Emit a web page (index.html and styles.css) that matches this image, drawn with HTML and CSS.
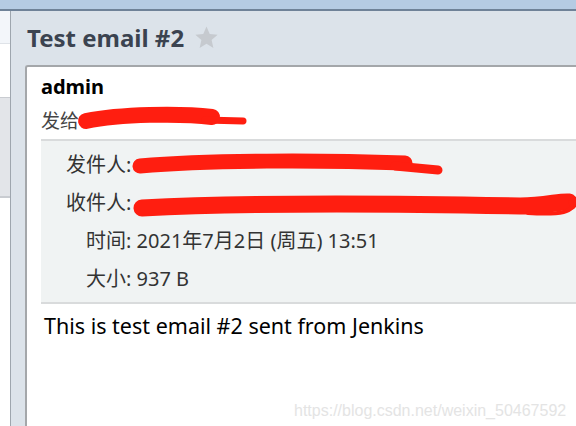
FILE: index.html
```html
<!DOCTYPE html>
<html lang="zh-CN">

<head>
    <meta charset="UTF-8">
    <title>Test email #2</title>
    <link rel="stylesheet" href="styles.css">
</head>

<body>
    <div class="topbar"></div>

    <div class="main">
        <div class="sidebar">
            <div class="side-head"></div>
            <div class="side-gap"></div>
            <div class="side-box"></div>
        </div>

        <div class="content">
            <h1 class="subject">
                Test email #2
                <svg class="star" width="25" height="25" viewBox="0 0 24 24">
                    <path d="M12 1.5l3.1 7.1 7.6.7-5.8 5.1 1.7 7.6L12 18l-6.6 4 1.7-7.6-5.8-5.1 7.6-.7z" fill="#c6cacf"/>
                </svg>
            </h1>

            <div class="card">
                <div class="sender">admin</div>
                <div class="sent-to">发给</div>

                <div class="details">
                    <div class="row"><span class="label">发件人:</span></div>
                    <div class="row"><span class="label">收件人:</span></div>
                    <div class="row indent"><span class="label">时间:</span> 2021年7月2日 (周五) 13:51</div>
                    <div class="row indent"><span class="label">大小:</span> 937 B</div>
                </div>

                <div class="body-text">This is test email #2 sent from Jenkins</div>

                <div class="watermark">https://blog.csdn.net/weixin_50467592</div>
            </div>
        </div>
    </div>

    <!-- redaction marks drawn over the addresses -->
    <svg class="redact" width="576" height="426" viewBox="0 0 576 426">
        <g fill="none" stroke="#ff1e10" stroke-linecap="round" stroke-linejoin="round">
            <path d="M86 121 C 120 114, 180 113, 212 117" stroke-width="16"/>
            <path d="M205 120 L 243 121" stroke-width="7"/>
            <path d="M140 166 C 210 160, 320 160, 405 163" stroke-width="15"/>
            <path d="M395 166 L 438 170" stroke-width="9"/>
            <path d="M142 208 C 260 202, 420 204, 520 206 C 545 206, 560 201, 569 202" stroke-width="17"/>
            <path d="M570 202 C 577 212, 560 215, 528 213" stroke-width="4"/>
        </g>
    </svg>
</body>

</html>
```

FILE: styles.css
```css
body {
    margin: 0;
    padding: 0;
    width: 576px;
    height: 426px;
    overflow: hidden;
    background-color: #fff;
    font-family: "Noto Sans", "Noto Sans CJK SC", sans-serif;
    color: #333;
}

.topbar {
    height: 9px;
    background-color: #b5cbe3;
    border-bottom: 2px solid #6f8298;
}

.main {
    display: flex;
    height: 415px;
}

.sidebar {
    width: 10px;
    border-right: 1px solid #9ea6ae;
    display: flex;
    flex-direction: column;
}

.side-head {
    height: 32px;
    background-color: #f3f6fa;
    border-bottom: 1px solid #dfe3e8;
}

.side-gap {
    height: 53px;
}

.side-box {
    height: 98px;
    background-color: #e3e5e9;
    border-top: 1px solid #c9ccd1;
    border-bottom: 2px solid #c9ccd1;
}

.content {
    flex: 1;
    background-color: #dce3ea;
    display: flex;
    flex-direction: column;
}

.subject {
    margin: 0;
    padding-left: 16px;
    height: 54px;
    line-height: 54px;
    font-size: 24px;
    font-weight: bold;
    color: #3b4350;
    display: flex;
    align-items: center;
    gap: 10px;
}

.star {
    margin-top: -2px;
}

.card {
    flex: 1;
    position: relative;
    margin-left: 14px;
    background-color: #fff;
    border-top: 2px solid #a4a7aa;
    border-left: 2px solid #a4a7aa;
    border-top-left-radius: 3px;
    padding-left: 14px;
}

.sender {
    margin-top: 6px;
    line-height: 28px;
    font-size: 20px;
    font-weight: bold;
    color: #000;
}

.sent-to {
    margin-top: 6px;
    line-height: 28px;
    font-size: 19px;
    color: #444;
}

.details {
    margin-top: 4px;
    padding: 5px 0 4px 0;
    background-color: #f0f3f3;
    border-top: 2px solid #d9dbdc;
    border-bottom: 2px solid #d9dbdc;
}

.row {
    line-height: 38px;
    font-size: 20px;
    padding-left: 25px;
    color: #333;
}

.row.indent {
    padding-left: 45px;
}

.body-text {
    margin-top: 7px;
    padding-left: 3px;
    line-height: 30px;
    font-size: 21.5px;
    color: #000;
}

.watermark {
    position: absolute;
    left: 267px;
    top: 335px;
    font-family: "Liberation Sans", Arial, sans-serif;
    font-size: 16px;
    color: #e4e4e4;
}

.redact {
    position: absolute;
    left: 0;
    top: 0;
}
```
